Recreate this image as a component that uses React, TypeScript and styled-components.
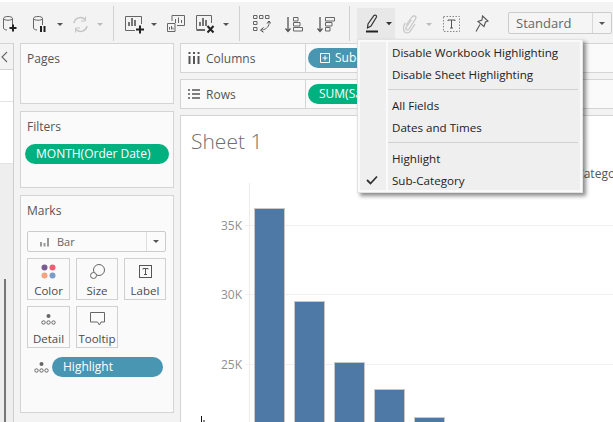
import React from "react";
import styled, { createGlobalStyle } from "styled-components";

const Global = createGlobalStyle`
  html, body { margin: 0; padding: 0; width: 613px; height: 422px; overflow: hidden; background: #f3f3f3; }
  #root { width: 613px; height: 422px; overflow: hidden; }
  * { box-sizing: border-box; }
`;

const Page = styled.div`
  position: relative;
  width: 613px;
  height: 422px;
  overflow: hidden;
  background: #f3f3f3;
  font-family: "Open Sans", "Noto Sans", sans-serif;
  font-size: 12px;
  color: #444;
  display: flex;
  flex-direction: column;
`;

const Toolbar = styled.div`
  height: 43px;
  flex: none;
  padding-top: 4px;
  display: flex;
  align-items: flex-start;
  border-top: 2px solid #fff;
`;

const Slot = styled.div<{ $w: number; $active?: boolean }>`
  width: ${(p) => p.$w}px;
  flex: none;
  height: 32px;
  margin-top: 2px;
  display: flex;
  align-items: center;
  justify-content: center;
  background: ${(p) => (p.$active ? "#e8e8e8" : "transparent")};
`;

const Sep = styled.div`
  width: 1px;
  height: 35px;
  flex: none;
  background: #d0d0d0;
`;

const Caret = styled.span<{ $dim?: boolean }>`
  width: 0;
  height: 0;
  border-left: 3px solid transparent;
  border-right: 3px solid transparent;
  border-top: 3px solid ${(p) => (p.$dim ? "#bbb" : "#555")};
`;

const StandardSelect = styled.div`
  width: 104px;
  height: 22px;
  margin: 6px 0 0 15px;
  flex: none;
  display: flex;
  align-items: center;
  background: #f5f5f5;
  border: 1px solid #ccc;
  border-radius: 2px;
  font-size: 13px;
  color: #666;
`;

const StandardText = styled.span`
  flex: 1;
  padding-left: 7px;
  border-right: 1px solid #d8d8d8;
  line-height: 20px;
`;

const StandardArrow = styled.span`
  width: 18px;
  display: flex;
  justify-content: center;
`;

const Body = styled.div`
  flex: 1;
  min-height: 0;
  display: flex;
`;

const LeftStub = styled.div`
  width: 14px;
  flex: none;
  background: #fff;
  border-right: 1px solid #cfcfcf;
  border-top: 1px solid #d4d4d4;
  display: flex;
  flex-direction: column;
`;

const StubHead = styled.div`
  height: 26px;
  background: #f3f3f3;
  border-bottom: 1px solid #d4d4d4;
  display: flex;
  align-items: center;
  color: #666;
`;

const StubWhite = styled.div<{ $h: number }>`
  height: ${(p) => p.$h}px;
  background: #fff;
  border-bottom: 1px solid #e4e4e4;
`;

const StubGrey = styled.div`
  flex: 1;
  background: #eeeeee;
  padding: 115px 0 0 4px;
`;

const StubScroll = styled.div`
  width: 2px;
  height: 100%;
  background: #777;
`;

const Cards = styled.div`
  width: 154px;
  margin-left: 6px;
  flex: none;
  display: flex;
  flex-direction: column;
  gap: 7px;
`;

const Card = styled.div<{ $h: number }>`
  height: ${(p) => p.$h}px;
  flex: none;
  background: #fafafa;
  border: 1px solid #d4d4d4;
  padding: 6px 7px 6px 6px;
`;

const CardTitle = styled.div`
  font-size: 12px;
  line-height: 17px;
  color: #555;
`;

const Pill = styled.div<{ $bg: string; $w: number }>`
  width: ${(p) => p.$w}px;
  height: 20px;
  flex: none;
  border-radius: 10px;
  background: ${(p) => p.$bg};
  color: #fff;
  font-size: 12px;
  line-height: 20px;
  padding-left: 11px;
  white-space: nowrap;
  overflow: hidden;
`;

const FilterPill = styled(Pill)`
  margin: 9px 0 0 -2px;
`;

const MarkSelect = styled.div`
  height: 21px;
  margin-top: 12px;
  display: flex;
  align-items: center;
  background: #fbfbfb;
  border: 1px solid #ccc;
  border-radius: 2px;
  color: #666;
  font-size: 11px;
`;

const MarkSelectLabel = styled.div`
  flex: 1;
  display: flex;
  align-items: center;
  gap: 7px;
  padding-left: 12px;
  border-right: 1px solid #ddd;
  height: 100%;
`;

const MarkSelectArrow = styled.div`
  width: 18px;
  display: flex;
  justify-content: center;
`;

const TileGrid = styled.div`
  display: grid;
  grid-template-columns: 43px 42px 42px;
  grid-auto-rows: 42px;
  column-gap: 6px;
  row-gap: 6px;
  margin-top: 6px;
`;

const Tile = styled.div`
  background: #fafafa;
  border: 1px solid #d0d0d0;
  display: flex;
  flex-direction: column;
  align-items: center;
  font-size: 11.5px;
  line-height: 15px;
  color: #4a4a4a;
`;

const TileIcon = styled.div`
  height: 24px;
  display: flex;
  align-items: center;
  justify-content: center;
`;

const MarkField = styled.div`
  display: flex;
  align-items: center;
  margin-top: 9px;
  padding-left: 7px;
`;

const MarkFieldIcon = styled.div`
  width: 18px;
  flex: none;
  display: flex;
`;

const Main = styled.div`
  margin-left: 6px;
  flex: 1;
  min-width: 0;
  display: flex;
  flex-direction: column;
  gap: 6px;
`;

const Shelf = styled.div`
  height: 30px;
  flex: none;
  display: flex;
  background: #fafafa;
  border: 1px solid #d4d4d4;
  border-right: none;
`;

const ShelfLabel = styled.div`
  width: 125px;
  flex: none;
  display: flex;
  align-items: center;
  gap: 6px;
  padding-left: 7px;
  border-right: 1px solid #d4d4d4;
  color: #555;
`;

const ShelfBody = styled.div`
  flex: 1;
  display: flex;
  align-items: center;
  padding-left: 2px;
`;

const ColumnsPill = styled(Pill)`
  display: flex;
  align-items: center;
  gap: 5px;
  padding-left: 12px;
`;

const Sheet = styled.div`
  position: relative;
  flex: 1;
  min-height: 0;
  background: #fff;
  border: 1px solid #d4d4d4;
  border-right: none;
  border-bottom: none;
  overflow: hidden;
`;

const SheetTitle = styled.div`
  font-size: 21px;
  line-height: 26px;
  font-weight: 300;
  color: #6e6e6e;
  padding: 12px 0 0 10px;
`;

const LegendTitle = styled.div`
  position: absolute;
  left: 370px;
  top: 50px;
  color: #555;
  font-size: 12px;
  line-height: 16px;
  white-space: nowrap;
`;

const ChartSvg = styled.svg`
  position: absolute;
  left: -1px;
  top: -1px;
  width: 433px;
  height: 307px;
  font-family: "Open Sans", "Noto Sans", sans-serif;
`;

const Cursor = styled.svg`
  position: absolute;
  left: 199px;
  top: 416px;
  width: 8px;
  height: 6px;
`;

const Menu = styled.div`
  position: absolute;
  left: 357px;
  top: 39px;
  width: 226px;
  height: 154px;
  background: #fafafa;
  border: 1px solid #e2e2e2;
  box-shadow: 3px 3px 4px rgba(0, 0, 0, 0.45);
  padding: 2px;
  display: flex;
  gap: 2px;
  font-size: 11.6px;
  color: #222;
`;

const MenuGutter = styled.div`
  width: 26px;
  flex: none;
  background: #efefef;
  position: relative;
`;

const MenuCheck = styled.svg`
  position: absolute;
  left: 6px;
  bottom: 5px;
  width: 12px;
  height: 10px;
`;

const MenuList = styled.div`
  flex: 1;
  background: #efefef;
  display: flex;
  flex-direction: column;
  overflow: hidden;
`;

const MenuItem = styled.div`
  height: 22px;
  flex: none;
  line-height: 22px;
  padding-left: 4px;
  white-space: nowrap;
`;

const MenuRule = styled.div`
  height: 1px;
  flex: none;
  margin: 3px 2px 5px 0;
  background: #d2d2d2;
`;

const Ico = ({ w, h, children }: { w: number; h: number; children: React.ReactNode }) => (
  <svg width={w} height={h} viewBox={`0 0 ${w} ${h}`} fill="none" style={{ flex: "none" }}>
    {children}
  </svg>
);

const Cyl = ({ c = "#666" }: { c?: string }) => (
  <path d="M1.500 3.500 C1.500 .8 10.500 .8 10.500 3.500 V10 M1.500 3.500 C1.500 5.800 10.500 5.800 10.500 3.500 M1.500 3.500 V13 C1.500 14.200 3 14.800 5 15" stroke={c} />
);

const Bars = ({ x = 3, y = 0 }: { x?: number; y?: number }) => (
  <path d={`M${x + 1} ${y + 11}V${y + 7} M${x + 4} ${y + 11}V${y + 3} M${x + 7} ${y + 11}V${y + 5}`} stroke="#555" strokeWidth="1.600" />
);

const ChartBox = () => <path d="M.5 14.500V.5H15.500M.5 14.500H9M15.500 .5V8" stroke="#666" />;

const DetailDots = () => (
  <Ico w={15} h={12}>
    <circle cx="7.500" cy="3" r="2" fill="#666" />
    <circle cx="2.500" cy="9.500" r="1.700" stroke="#666" />
    <circle cx="7.500" cy="9.500" r="1.700" stroke="#666" />
    <circle cx="12.500" cy="9.500" r="1.700" stroke="#666" />
  </Ico>
);

export default function App() {
  return (
    <Page>
      <Global />
      <Toolbar>
        <Slot $w={19}>
          <Ico w={16} h={18}>
            <Cyl />
            <path d="M11 9.500v7M7.500 13h7" stroke="#222" strokeWidth="2" />
          </Ico>
        </Slot>
        <Slot $w={11} />
        <Slot $w={20}>
          <Ico w={16} h={18}>
            <Cyl />
            <path d="M9 11v6M12.500 11v6" stroke="#222" strokeWidth="2" />
          </Ico>
        </Slot>
        <Slot $w={20}><Caret /></Slot>
        <Slot $w={20}>
          <Ico w={17} h={17}>
            <path d="M2 7 A6.500 6.500 0 0 1 13 3.500 M15 10 A6.500 6.500 0 0 1 4 13.500" stroke="#c4c4c4" strokeWidth="1.500" />
            <path d="M13.500 0.500V5H9M3.500 16.500V12H8" stroke="#c4c4c4" />
          </Ico>
        </Slot>
        <Slot $w={20}><Caret $dim /></Slot>
        <Slot $w={3} />
        <Sep />
        <Slot $w={10} />
        <Slot $w={21}>
          <Ico w={20} h={19}>
            <path d="M.5 15.500V1.500H16.500V9M.5 15.500H10" stroke="#666" />
            <Bars />
            <path d="M15 10.500v8M11 14.500h8" stroke="#222" strokeWidth="2" />
          </Ico>
        </Slot>
        <Slot $w={18}><Caret /></Slot>
        <Slot $w={26}>
          <Ico w={18} h={18}>
            <path d="M.5 8.500H8V16.500H.5Z" stroke="#666" />
            <path d="M5 6V.5H17.500V10.500H10" stroke="#666" />
            <path d="M8.500 8V4M11.500 8V2.500M14.500 8V5M2.500 14.500V12M4.500 14.500V11M6 14.500V12.500" stroke="#666" />
          </Ico>
        </Slot>
        <Slot $w={34}>
          <Ico w={20} h={19}>
            <ChartBox />
            <path d="M.5 15.500H9" stroke="#666" />
            <Bars />
            <path d="M11.500 11l6 6.500M17.500 11l-6 6.500" stroke="#222" strokeWidth="2" />
          </Ico>
        </Slot>
        <Slot $w={6}><Caret /></Slot>
        <Slot $w={10} />
        <Sep />
        <Slot $w={43}>
          <Ico w={18} h={18}>
            <path d="M.5.5h3.500v3H.5zM6.500.5H10v3H6.500zM12.500.5H16v3h-3.500zM.5 6.500h3.500v3H.5zM.5 12.500h3.500v3H.5z" stroke="#666" />
            <path d="M16 7c.5 4-2 7-7 8" stroke="#666" />
            <path d="M10.500 12.500 7.500 15.200l3 2M14 8.500l2-2.500 1.800 2.500" stroke="#444" />
          </Ico>
        </Slot>
        <Slot $w={22}>
          <Ico w={18} h={17}>
            <path d="M3 1v14M.5 12.500 3 15.500l2.500-3" stroke="#555" strokeWidth="1.300" />
            <path d="M8.500 1.500h4.500v3.500H8.500zM8.500 6.500h6.500V10H8.500zM8.500 11.500h9v3.500h-9z" stroke="#666" />
          </Ico>
        </Slot>
        <Slot $w={42}>
          <Ico w={18} h={17}>
            <path d="M3 1v14M.5 12.500 3 15.500l2.500-3" stroke="#555" strokeWidth="1.300" />
            <path d="M8.500 1.500h9V5h-9zM8.500 6.500h6.500V10H8.500zM8.500 11.500h4.500v3.500H8.500z" stroke="#666" />
          </Ico>
        </Slot>
        <Slot $w={2} />
        <Sep />
        <Slot $w={7} />
        <Slot $w={38} $active>
          <Ico w={32} h={24}>
            <path d="M7.500 16 8 12 14 3.500C15 2.500 17 3.500 16.500 5L11 14Z" stroke="#333" strokeWidth="1.200" />
            <path d="M6 19.500h12" stroke="#222" strokeWidth="2" />
            <path d="M26 10h6l-3 3.200z" fill="#333" />
          </Ico>
        </Slot>
        <Slot $w={30}>
          <Ico w={15} h={20}>
            <path d="M3 11 9 3c2-2.500 5-.5 3.500 2L6 15c-1.500 2-4 .5-3-1.500L8.500 6M2 9 .8 12C0 16 1 19 4 19c2 0 3-1 4-3l4-6" stroke="#c6c6c6" strokeWidth="1.200" />
          </Ico>
        </Slot>
        <Slot $w={8}><Caret $dim /></Slot>
        <Slot $w={37}>
          <Ico w={17} h={16}>
            <rect x=".5" y=".5" width="16" height="15" stroke="#888" strokeDasharray="1.500 1.500" />
            <path d="M5 5V4h7v1M8.500 4v8M7 12h3" stroke="#555" />
          </Ico>
        </Slot>
        <Slot $w={23}>
          <Ico w={14} h={18}>
            <path d="M7.500 1 13 6 10.500 7 9 11.500 3 6.500 7 5ZM5 9.500 1 16.500" stroke="#555" strokeWidth="1.100" />
          </Ico>
        </Slot>
        <StandardSelect>
          <StandardText>Standard</StandardText>
          <StandardArrow><Caret /></StandardArrow>
        </StandardSelect>
      </Toolbar>
      <Body>
        <LeftStub>
          <StubHead>
            <Ico w={9} h={12}>
              <path d="M7 1 2 6l5 5" stroke="#666" strokeWidth="1.100" />
            </Ico>
          </StubHead>
          <StubWhite $h={32} />
          <StubWhite $h={62} />
          <StubGrey><StubScroll /></StubGrey>
        </LeftStub>
        <Cards>
          <Card $h={61}>
            <CardTitle>Pages</CardTitle>
          </Card>
          <Card $h={77}>
            <CardTitle>Filters</CardTitle>
            <FilterPill $bg="#00b180" $w={144}>MONTH(Order Date)</FilterPill>
          </Card>
          <Card $h={218}>
            <CardTitle>Marks</CardTitle>
            <MarkSelect>
              <MarkSelectLabel>
                <Ico w={10} h={10}>
                  <path d="M1 9.500V5M4.500 9.500V6M8 9.500V1" stroke="#999" strokeWidth="2" />
                </Ico>
                Bar
              </MarkSelectLabel>
              <MarkSelectArrow><Caret /></MarkSelectArrow>
            </MarkSelect>
            <TileGrid>
              <Tile>
                <TileIcon>
                  <Ico w={15} h={15}>
                    <circle cx="3.500" cy="3.500" r="3" fill="#7a5c93" />
                    <circle cx="11.500" cy="3.500" r="3" fill="#ef5f74" />
                    <circle cx="3.500" cy="11.500" r="3" fill="#f2a57f" />
                    <circle cx="11.500" cy="11.500" r="3" fill="#7b9cc8" />
                  </Ico>
                </TileIcon>
                Color
              </Tile>
              <Tile>
                <TileIcon>
                  <Ico w={15} h={15}>
                    <circle cx="9" cy="6" r="5.500" stroke="#666" />
                    <circle cx="3.500" cy="11.500" r="3" fill="#fafafa" stroke="#666" />
                  </Ico>
                </TileIcon>
                Size
              </Tile>
              <Tile>
                <TileIcon>
                  <Ico w={13} h={13}>
                    <rect x=".5" y=".5" width="12" height="12" stroke="#555" />
                    <path d="M4 4.500V3.500h5v1M6.500 3.500v6M5 9.500h3" stroke="#555" />
                  </Ico>
                </TileIcon>
                Label
              </Tile>
              <Tile>
                <TileIcon><DetailDots /></TileIcon>
                Detail
              </Tile>
              <Tile>
                <TileIcon>
                  <Ico w={15} h={14}>
                    <path d="M.5.5h14v9.500h-3.500l-1.500 3-2-3H.5z" stroke="#666" />
                  </Ico>
                </TileIcon>
                Tooltip
              </Tile>
            </TileGrid>
            <MarkField>
              <MarkFieldIcon><DetailDots /></MarkFieldIcon>
              <Pill $bg="#4996b2" $w={111}>Highlight</Pill>
            </MarkField>
          </Card>
        </Cards>
        <Main>
          <Shelf>
            <ShelfLabel>
              <Ico w={12} h={12}>
                <path d="M1.500 4v8M6 4v8M10.500 4v8M1.500 0v2M6 0v2M10.500 0v2" stroke="#555" strokeWidth="2" />
              </Ico>
              Columns
            </ShelfLabel>
            <ShelfBody>
              <ColumnsPill $bg="#4996b2" $w={130}>
                <Ico w={10} h={10}>
                  <path d="M.5.5h9v9h-9zM5 2.500v5M2.500 5h5" stroke="#fff" />
                </Ico>
                Sub-Category
              </ColumnsPill>
            </ShelfBody>
          </Shelf>
          <Shelf>
            <ShelfLabel>
              <Ico w={12} h={10}>
                <path d="M0 1h2M4 1h8M0 5h2M4 5h8M0 9h2M4 9h8" stroke="#555" strokeWidth="1.600" />
              </Ico>
              Rows
            </ShelfLabel>
            <ShelfBody>
              <Pill $bg="#00b180" $w={100}>SUM(Sales)</Pill>
            </ShelfBody>
          </Shelf>
          <Sheet>
            <SheetTitle>Sheet 1</SheetTitle>
            <LegendTitle>Sub-Category</LegendTitle>
            <ChartSvg viewBox="0 0 433 307">
              <path d="M69.500 68V307" stroke="#ececec" />
              <path d="M65 110.500H433M65 179.500H433M65 249.500H433" stroke="#f0f0f0" />
              <g fill="#8f8f8f" fontSize="12" textAnchor="end">
                <text x="62" y="114.500">35K</text>
                <text x="62" y="184">30K</text>
                <text x="62" y="253.500">25K</text>
              </g>
              <g fill="#4e79a7" stroke="#c8c8c8">
                <rect x="74.500" y="93.500" width="30" height="220" />
                <rect x="114.500" y="186.500" width="30" height="130" />
                <rect x="154.500" y="247.500" width="30" height="70" />
                <rect x="194.500" y="274.500" width="30" height="40" />
                <rect x="234.500" y="302.500" width="30" height="20" />
              </g>
            </ChartSvg>
          </Sheet>
        </Main>
      </Body>
      <Cursor viewBox="0 0 8 6">
        <path d="M2.500 0V6" stroke="#111" />
        <path d="M5 4V6" stroke="#111" />
      </Cursor>
      <Menu>
        <MenuGutter>
          <MenuCheck viewBox="0 0 12 10">
            <path d="M1 5 4.500 8.500 11 1.500" stroke="#333" strokeWidth="1.800" fill="none" />
          </MenuCheck>
        </MenuGutter>
        <MenuList>
          <MenuItem>Disable Workbook Highlighting</MenuItem>
          <MenuItem>Disable Sheet Highlighting</MenuItem>
          <MenuRule />
          <MenuItem>All Fields</MenuItem>
          <MenuItem>Dates and Times</MenuItem>
          <MenuRule />
          <MenuItem>Highlight</MenuItem>
          <MenuItem>Sub-Category</MenuItem>
        </MenuList>
      </Menu>
    </Page>
  );
}
